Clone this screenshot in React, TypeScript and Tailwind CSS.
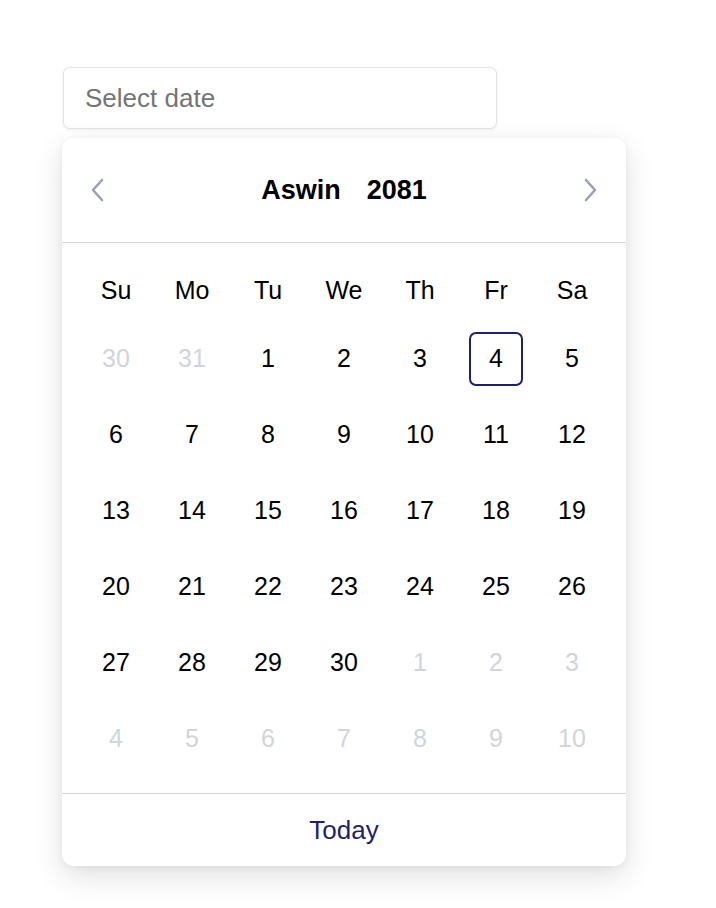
import React from "react";

const weekdays = ["Su", "Mo", "Tu", "We", "Th", "Fr", "Sa"];

type Day = { n: number; muted?: boolean; selected?: boolean };

const days: Day[] = [
  { n: 30, muted: true },
  { n: 31, muted: true },
  ...Array.from({ length: 30 }, (_, i) => ({ n: i + 1, selected: i + 1 === 4 })),
  ...Array.from({ length: 10 }, (_, i) => ({ n: i + 1, muted: true })),
];

export default function App() {
  return (
    <div
      className="min-h-[908px] w-full bg-white"
      style={{ fontFamily: '"Liberation Sans", Arial, sans-serif' }}
    >
      <div className="pl-[62px] pt-[67px]">
        <div className="ml-px flex h-[62px] w-[434px] items-center rounded-[7px] border border-[#e3e3e3] bg-white px-[21px] shadow-[0_1px_3px_rgba(0,0,0,0.06)]">
          <span className="text-[26px] text-[#757575]">Select date</span>
        </div>
        <div className="mt-[9px] w-[564px] rounded-[12px] bg-white shadow-[0_10px_30px_rgba(0,0,0,0.12),0_2px_8px_rgba(0,0,0,0.05)]">
          <div className="flex h-[105px] items-center justify-between border-b border-[#d1d5db] px-[28px]">
            <svg width="16" height="24" viewBox="0 0 16 24" fill="none">
              <path d="M12 2 L3 12 L12 22" stroke="#9aa1b0" strokeWidth="2.6" strokeLinecap="round" strokeLinejoin="round" />
            </svg>
            <div className="flex items-center gap-[26px] text-[27px] font-bold text-black">
              <span>Aswin</span>
              <span>2081</span>
            </div>
            <svg width="16" height="24" viewBox="0 0 16 24" fill="none">
              <path d="M4 2 L13 12 L4 22" stroke="#9aa1b0" strokeWidth="2.6" strokeLinecap="round" strokeLinejoin="round" />
            </svg>
          </div>
          <div className="px-4 pb-4 pt-[17px]">
            <div className="grid grid-cols-7">
              {weekdays.map((w) => (
                <div key={w} className="flex h-[61px] items-center justify-center text-[25px] text-black">
                  {w}
                </div>
              ))}
              {days.map((d, i) => (
                <div key={i} className="flex h-[76px] items-center justify-center">
                  <div
                    className={
                      "flex h-[54px] w-[54px] items-center justify-center rounded-[7px] text-[25px] " +
                      (d.selected ? "border-2 border-[#1e1f6e] " : "") +
                      (d.muted ? "text-[#d1d5db]" : "text-black")
                    }
                  >
                    {d.n}
                  </div>
                </div>
              ))}
            </div>
          </div>
          <div className="flex h-[73px] items-center justify-center border-t border-[#d1d5db]">
            <span className="text-[26px] text-[#1e1f6e]">Today</span>
          </div>
        </div>
      </div>
    </div>
  );
}
